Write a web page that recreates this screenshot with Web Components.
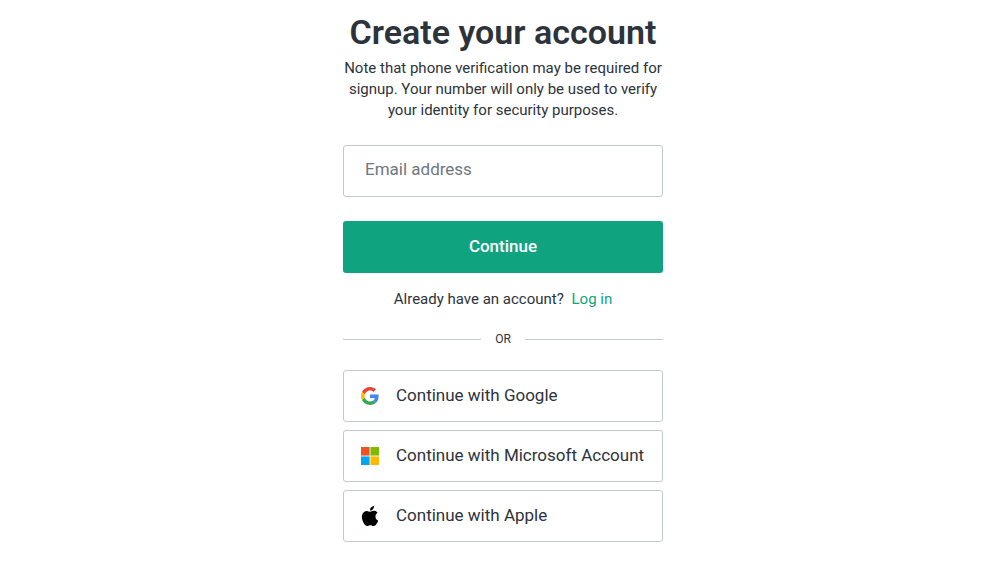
<!DOCTYPE html>
<html lang="en">
<head>
<meta charset="utf-8">
<meta name="viewport" content="width=device-width, initial-scale=1">
<title>Create your account</title>
<style>
  body {
    margin: 0;
    background: #fff;
    color: #2d333a;
    font-family: Roboto, "Liberation Sans", sans-serif;
    --border: #c2c8d0;
    --accent: #10a37f;
  }
</style>
</head>
<body>
<signup-page>
  <page-heading slot="heading">
    Create your account
    <span slot="note">Note that phone verification may be required for signup. Your number will only be used to verify your identity for security purposes.</span>
  </page-heading>
  <email-form></email-form>
  <or-divider>OR</or-divider>
  <provider-list>
    <provider-button>
      <svg slot="icon" width="18" height="18" viewBox="0 0 48 48" aria-hidden="true">
        <path fill="#EA4335" d="M24 9.5c3.54 0 6.71 1.22 9.21 3.6l6.85-6.85C35.9 2.38 30.47 0 24 0 14.62 0 6.51 5.38 2.56 13.22l7.98 6.19C12.43 13.72 17.74 9.5 24 9.5z"/>
        <path fill="#4285F4" d="M46.98 24.55c0-1.57-.15-3.09-.38-4.55H24v9.02h12.94c-.58 2.96-2.26 5.48-4.78 7.18l7.73 6c4.51-4.18 7.09-10.36 7.09-17.65z"/>
        <path fill="#FBBC05" d="M10.53 28.59c-.48-1.45-.76-2.99-.76-4.59s.27-3.14.76-4.59l-7.98-6.19C.92 16.46 0 20.12 0 24c0 3.88.92 7.54 2.56 10.78l7.97-6.19z"/>
        <path fill="#34A853" d="M24 48c6.48 0 11.93-2.13 15.89-5.81l-7.73-6c-2.15 1.45-4.92 2.3-8.16 2.3-6.26 0-11.57-4.22-13.47-9.91l-7.98 6.19C6.51 42.62 14.62 48 24 48z"/>
      </svg>
      Continue with Google
    </provider-button>
    <provider-button>
      <svg slot="icon" width="18" height="18" viewBox="0 0 21 21" aria-hidden="true">
        <rect width="10" height="10" fill="#f25022"/>
        <rect x="11" width="10" height="10" fill="#7fba00"/>
        <rect y="11" width="10" height="10" fill="#00a4ef"/>
        <rect x="11" y="11" width="10" height="10" fill="#ffb900"/>
      </svg>
      Continue with Microsoft Account
    </provider-button>
    <provider-button>
      <svg slot="icon" width="20" height="20" viewBox="0 0 24 24" aria-hidden="true">
        <path fill="#000" d="M12.152 6.896c-.948 0-2.415-1.078-3.96-1.04-2.04.027-3.91 1.183-4.961 3.014-2.117 3.675-.546 9.103 1.519 12.09 1.013 1.454 2.208 3.09 3.792 3.039 1.52-.065 2.09-.987 3.935-.987 1.831 0 2.35.987 3.96.948 1.637-.026 2.676-1.48 3.676-2.948 1.156-1.688 1.636-3.325 1.662-3.415-.039-.013-3.182-1.221-3.22-4.857-.026-3.04 2.48-4.494 2.597-4.559-1.429-2.09-3.623-2.324-4.39-2.376-2-.156-3.675 1.09-4.61 1.09zM15.53 3.83c.843-1.012 1.4-2.427 1.245-3.83-1.207.052-2.662.805-3.532 1.818-.78.896-1.454 2.338-1.273 3.714 1.338.104 2.715-.688 3.559-1.701"/>
      </svg>
      Continue with Apple
    </provider-button>
  </provider-list>
</signup-page>

<script>
  function define(name, html) {
    const template = document.createElement('template');
    template.innerHTML = html;
    customElements.define(name, class extends HTMLElement {
      constructor() {
        super();
        this.attachShadow({ mode: 'open' }).append(template.content.cloneNode(true));
      }
    });
  }

  define('signup-page', `
    <style>
      :host { display: block; padding: 12px 0 24px 12px; }
      main { display: flex; flex-direction: column; max-width: 320px; margin: 0 auto; }
    </style>
    <main><slot name="heading"></slot><slot></slot></main>`);

  define('page-heading', `
    <style>
      :host { display: block; text-align: center; }
      h1 { margin: 0; font-size: 34px; line-height: 40px; font-weight: 600; }
      p { margin: 6px 0 0; font-size: 15px; line-height: 21px; }
    </style>
    <h1><slot></slot></h1>
    <p><slot name="note"></slot></p>`);

  define('email-form', `
    <style>
      :host { display: block; margin-top: 24px; }
      form { display: flex; flex-direction: column; gap: 24px; margin: 0; }
      input, button { box-sizing: border-box; width: 100%; height: 52px; border-radius: 3px; font: inherit; font-size: 17px; }
      input { padding: 0 21px 4px; border: 1px solid var(--border); background: #fff; color: inherit; }
      input::placeholder { color: #6f777f; opacity: 1; }
      button { padding: 0 0 2px; border: 0; background: var(--accent); color: #fff; font-weight: 500; cursor: pointer; }
      p { margin: 16px 0 0; font-size: 15px; line-height: 21px; text-align: center; }
      a { margin-left: 4px; color: var(--accent); text-decoration: none; }
    </style>
    <form>
      <input type="email" placeholder="Email address" aria-label="Email address">
      <button type="button">Continue</button>
    </form>
    <p>Already have an account? <a href="#login">Log in</a></p>`);

  define('or-divider', `
    <style>
      :host { display: flex; align-items: center; gap: 14px; margin: 20px 0 22px; font-size: 12px; line-height: 18px; }
      :host::before, :host::after { content: ""; flex: 1; height: 1px; background: var(--border); }
    </style>
    <slot></slot>`);

  define('provider-list', `
    <style>:host { display: flex; flex-direction: column; gap: 8px; }</style>
    <slot></slot>`);

  define('provider-button', `
    <style>
      :host { display: block; }
      button { display: flex; align-items: center; gap: 16px; box-sizing: border-box; width: 100%; height: 52px;
        padding: 0 16px; border: 1px solid var(--border); border-radius: 3px; background: #fff; color: inherit;
        font: inherit; font-size: 17px; text-align: left; cursor: pointer; }
      .icon { display: flex; justify-content: center; width: 20px; }
      .label { padding-bottom: 2px; }
    </style>
    <button type="button"><span class="icon"><slot name="icon"></slot></span><span class="label"><slot></slot></span></button>`);
</script>
</body>
</html>
